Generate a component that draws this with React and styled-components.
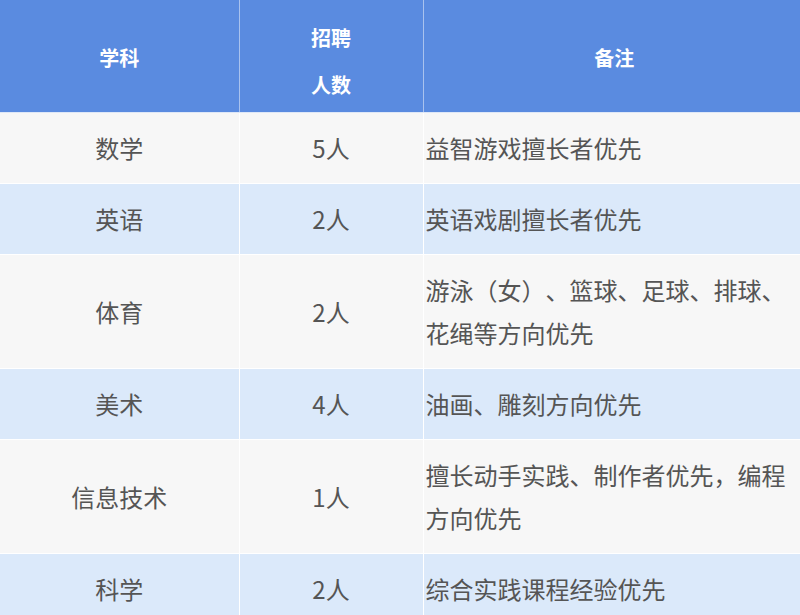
import React from "react";
import styled, { createGlobalStyle } from "styled-components";

/* 全局样式 */
const GlobalStyle = createGlobalStyle`
    html, body {
        margin: 0;
        padding: 0;
        background: #f7f7f7;
        overflow: hidden;
    }
    body {
        font-family: "Noto Sans CJK SC", "Noto Sans", sans-serif;
        text-spacing-trim: space-all;
    }
`;

const Table = styled.table`
    width: 806px;
    border-collapse: collapse;
    table-layout: fixed;
    font-size: 24px;
    color: #555;
`;

const HeadCell = styled.th`
    background: #5a8be0;
    color: #fff;
    font-size: 20px;
    font-weight: 700;
    line-height: 47px;
    padding: ${(p) => (p.$single ? "9px 0 7px" : "14px 0 4px")};
    text-align: center;
    vertical-align: middle;
    border: 1px solid #a9c2ee;
    border-top: none;
    border-bottom: 1px solid #dfe8f7;

    &:first-child {
        border-left: none;
    }
`;

const Row = styled.tr`
    background: ${(p) => (p.$blue ? "#dbe9fa" : "#f7f7f7")};
`;

const Cell = styled.td`
    padding: ${(p) => (p.$left ? "13px 13px 14px 2px" : "13px 0 14px")};
    line-height: 43px;
    text-align: ${(p) => (p.$left ? "left" : "center")};
    vertical-align: middle;
    border: 1px solid #ffffff;
    border-top: none;
    font-weight: 400;

    &:first-child {
        border-left: none;
    }
`;

const rows = [
    ["数学", "5人", "益智游戏擅长者优先"],
    ["英语", "2人", "英语戏剧擅长者优先"],
    ["体育", "2人", "游泳（女）、篮球、足球、排球、花绳等方向优先"],
    ["美术", "4人", "油画、雕刻方向优先"],
    ["信息技术", "1人", "擅长动手实践、制作者优先，编程方向优先"],
    ["科学", "2人", "综合实践课程经验优先"],
];

const App = function App() {
    return <>
        <GlobalStyle />
        <Table>
            <colgroup>
                <col style={{ width: 239 }} />
                <col style={{ width: 184 }} />
                <col />
            </colgroup>
            <thead>
                <tr>
                    <HeadCell $single>学科</HeadCell>
                    <HeadCell>招聘<br />人数</HeadCell>
                    <HeadCell $single>备注</HeadCell>
                </tr>
            </thead>
            <tbody>
                {rows.map((r, i) => (
                    <Row key={r[0]} $blue={i % 2 === 1}>
                        <Cell>{r[0]}</Cell>
                        <Cell>{r[1]}</Cell>
                        <Cell $left>{r[2]}</Cell>
                    </Row>
                ))}
            </tbody>
        </Table>
    </>;
};

export default App;
